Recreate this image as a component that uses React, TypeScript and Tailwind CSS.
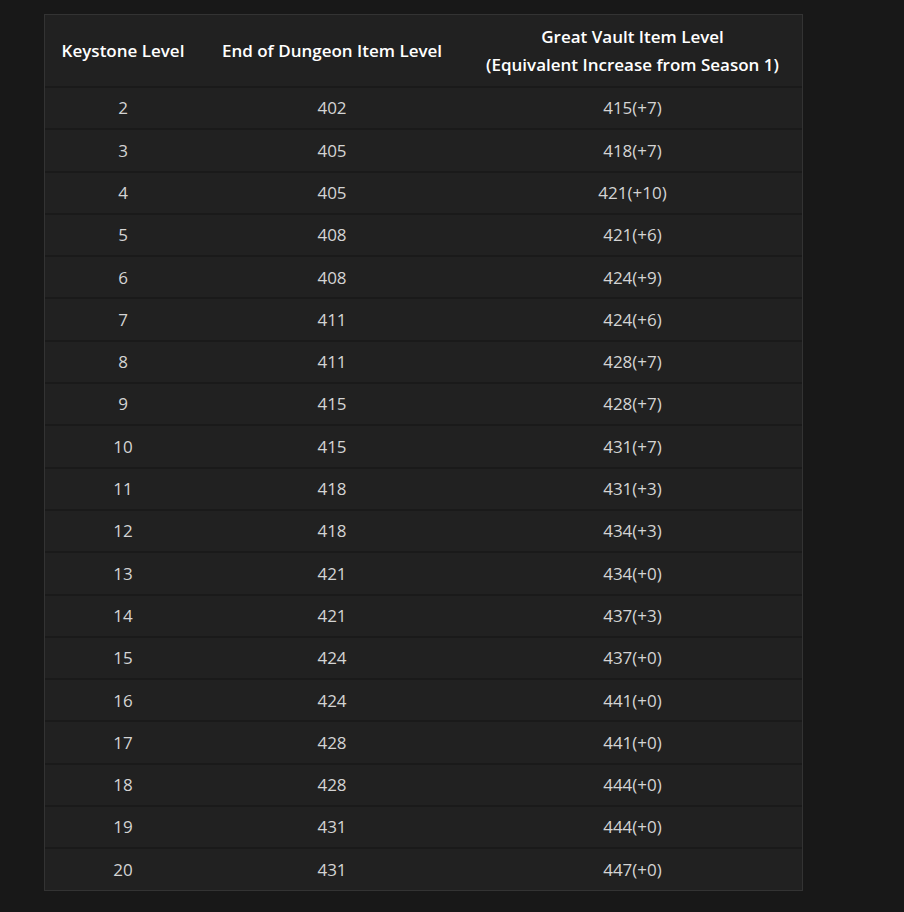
import React from 'react';

type Row = { key: number; end: number; vault: string };

const rows: Row[] = [
  { key: 2, end: 402, vault: '415(+7)' },
  { key: 3, end: 405, vault: '418(+7)' },
  { key: 4, end: 405, vault: '421(+10)' },
  { key: 5, end: 408, vault: '421(+6)' },
  { key: 6, end: 408, vault: '424(+9)' },
  { key: 7, end: 411, vault: '424(+6)' },
  { key: 8, end: 411, vault: '428(+7)' },
  { key: 9, end: 415, vault: '428(+7)' },
  { key: 10, end: 415, vault: '431(+7)' },
  { key: 11, end: 418, vault: '431(+3)' },
  { key: 12, end: 418, vault: '434(+3)' },
  { key: 13, end: 421, vault: '434(+0)' },
  { key: 14, end: 421, vault: '437(+3)' },
  { key: 15, end: 424, vault: '437(+0)' },
  { key: 16, end: 424, vault: '441(+0)' },
  { key: 17, end: 428, vault: '441(+0)' },
  { key: 18, end: 428, vault: '444(+0)' },
  { key: 19, end: 431, vault: '444(+0)' },
  { key: 20, end: 431, vault: '447(+0)' },
];

export default function App() {
  return (
    <div className="min-h-[912px] w-full bg-[#181818] pt-[14px] pl-[44px] font-['Open_Sans',sans-serif]">
      <div className="w-[759px] border border-[#333333] bg-[#212121]">
        {/* header */}
        <div className="flex h-[71px] items-center text-[17px] font-semibold leading-[28px] text-white">
          <div className="w-[156px] text-center">Keystone Level</div>
          <div className="w-[262px] text-center">End of Dungeon Item Level</div>
          <div className="flex-1 text-center">
            Great Vault Item Level
            <br />
            (Equivalent Increase from Season 1)
          </div>
        </div>

        {/* rows */}
        {rows.map((r) => (
          <div
            key={r.key}
            className="flex h-[42.3px] items-center border-t-2 border-[#1a1a1a] text-[17px] text-[#d4d4d4]"
          >
            <div className="w-[156px] text-center">{r.key}</div>
            <div className="w-[262px] text-center">{r.end}</div>
            <div className="flex-1 text-center">{r.vault}</div>
          </div>
        ))}
      </div>
    </div>
  );
}
